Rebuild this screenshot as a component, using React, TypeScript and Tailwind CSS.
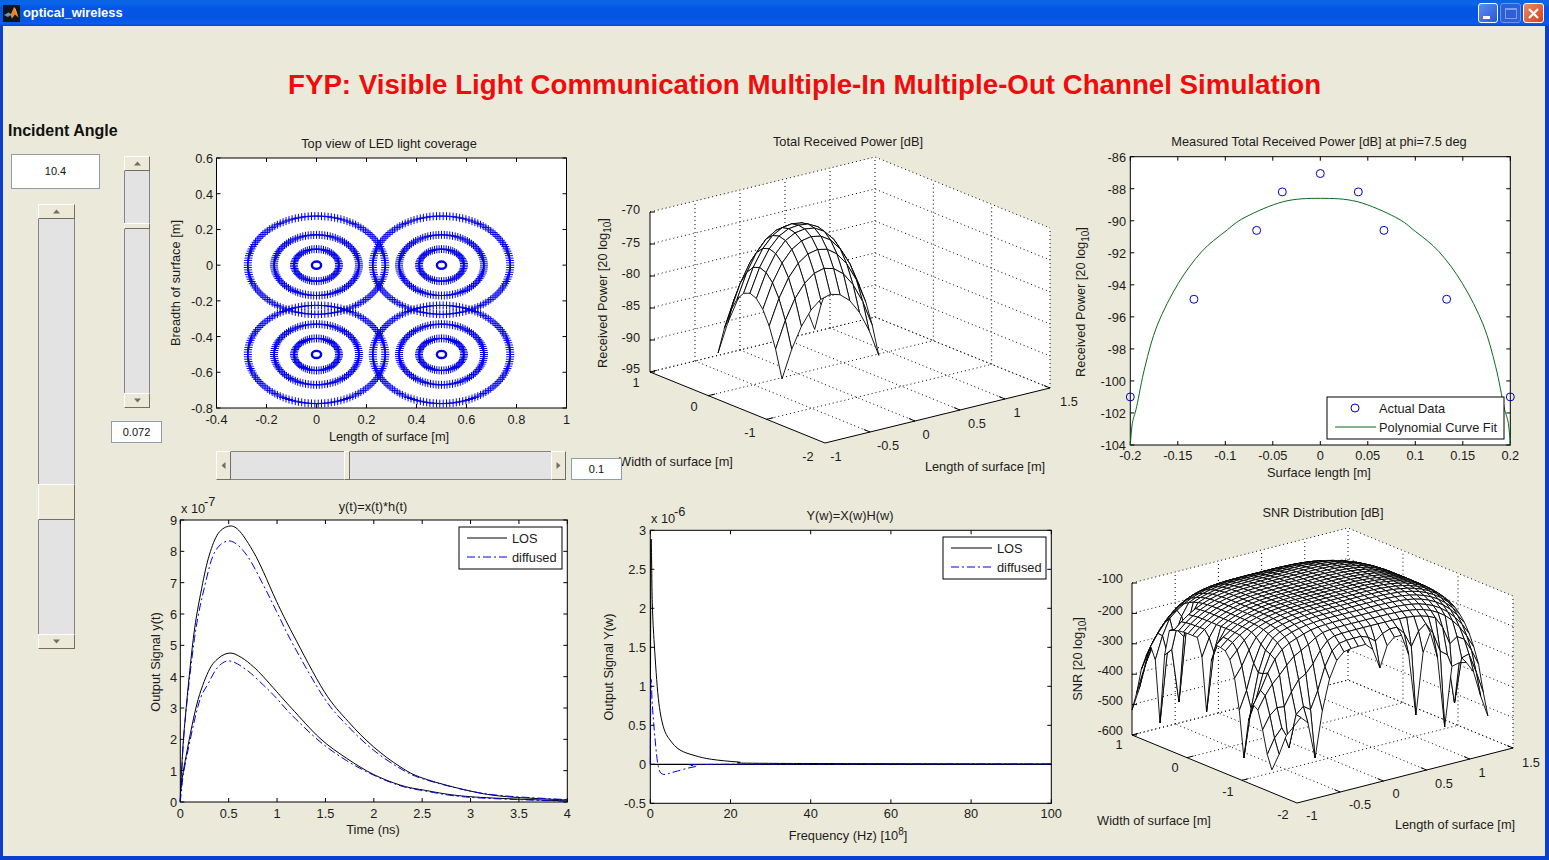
import React from "react";

type Pt = [number, number];
type Tick = [number, string];

// z arr are read off the reference at 3x zoom, this puts them back in page pixels
const unzoom = (ox: number, oy: number, arr: Pt[]): Pt[] =>
  arr.map(([x, y]) => [ox + x / 3, oy + y / 3]);

const spline = (p: Pt[]) => {
  let d = `M${p[0][0]} ${p[0][1]}`;
  for (let i = 0; i < p.length - 1; i++) {
    const a = p[Math.max(i - 1, 0)];
    const b = p[i];
    const c = p[i + 1];
    const e = p[Math.min(i + 2, p.length - 1)];
    d += `C${b[0] + (c[0] - a[0]) / 6} ${b[1] + (c[1] - a[1]) / 6} ${c[0] - (e[0] - b[0]) / 6} ${c[1] - (e[1] - b[1]) / 6} ${c[0]} ${c[1]}`;
  }
  return d;
};

function Label({ x, y, children, end, start, rotate }: { x: number; y: number; children: React.ReactNode; end?: boolean; start?: boolean; rotate?: boolean }) {
  return (
    <text
      x={x}
      y={y}
      textAnchor={end ? "end" : start ? "start" : "middle"}
      transform={rotate ? `rotate(-90 ${x} ${y})` : undefined}
    >
      {children}
    </text>
  );
}

function Axes({ l, r, t, b, xlim, ylim, xs, ys, xBase, yEdge }: { l: number; r: number; t: number; b: number; xlim: Pt; ylim: Pt; xs: Tick[]; ys: Tick[]; xBase: number; yEdge: number }) {
  const px = (v: number) => l + ((v - xlim[0]) / (xlim[1] - xlim[0])) * (r - l);
  const py = (v: number) => b - ((v - ylim[0]) / (ylim[1] - ylim[0])) * (b - t);
  return (
    <g>
      <rect x={l} y={t} width={r - l} height={b - t} fill="#fff" stroke="#000" />
      {xs.map(([v, s]) => (
        <g key={s}>
          <path d={`M${px(v)} ${b}v-4M${px(v)} ${t}v4`} stroke="#000" />
          <Label x={px(v)} y={xBase}>{s}</Label>
        </g>
      ))}
      {ys.map(([v, s]) => (
        <g key={s}>
          <path d={`M${l} ${py(v)}h4M${r} ${py(v)}h-4`} stroke="#000" />
          <Label x={yEdge} y={py(v) + 5} end>{s}</Label>
        </g>
      ))}
    </g>
  );
}

// 3D box: F is the front floor corner, R the right one, L the left one, H the wall height
function Box3D({ F, R, L, H, xn, yn, zn }: { F: Pt; R: Pt; L: Pt; H: number; xn: number; yn: number; zn: number }) {
  const back: Pt = [L[0] + R[0] - F[0], L[1] + R[1] - F[1]];
  const lines: string[] = [];
  const ticks: string[] = [];
  const vx = [R[0] - F[0], R[1] - F[1]];
  const vy = [L[0] - F[0], L[1] - F[1]];
  for (let i = 0; i <= xn; i++) {
    const a = i / xn;
    const x0 = F[0] + vx[0] * a;
    const y0 = F[1] + vx[1] * a;
    if (i > 0) {
      lines.push(`M${x0} ${y0}L${x0 + vy[0]} ${y0 + vy[1]}`);
      ticks.push(`M${x0} ${y0}l${-vy[0] * -0.035} ${-vy[1] * -0.035}`);
    }
    if (i > 0 && i < xn) lines.push(`M${x0 + vy[0]} ${y0 + vy[1]}v${-H}`);
  }
  for (let i = 0; i <= yn; i++) {
    const a = i / yn;
    const x0 = F[0] + vy[0] * a;
    const y0 = F[1] + vy[1] * a;
    if (i > 0) {
      lines.push(`M${x0} ${y0}L${x0 + vx[0]} ${y0 + vx[1]}`);
      ticks.push(`M${x0} ${y0}l${vx[0] * 0.03} ${vx[1] * 0.03}`);
    }
    if (i > 0 && i < yn) lines.push(`M${x0 + vx[0]} ${y0 + vx[1]}v${-H}`);
  }
  for (let i = 0; i <= zn; i++) {
    const h = (i / zn) * H;
    lines.push(`M${L[0]} ${L[1] - h}L${back[0]} ${back[1] - h}L${R[0]} ${R[1] - h}`);
    ticks.push(`M${L[0]} ${L[1] - h}h5`);
  }
  lines.push(`M${back[0]} ${back[1]}v${-H}M${R[0]} ${R[1]}v${-H}`);
  return (
    <g>
      <path
        d={`M${F[0]} ${F[1]}L${R[0]} ${R[1]}V${R[1] - H}L${back[0]} ${back[1] - H}L${L[0]} ${L[1] - H}V${L[1]}Z`}
        fill="#fff"
      />
      <path d={lines.join("")} stroke="#000" strokeDasharray="1 3" fill="none" />
      <path d={`M${L[0]} ${L[1] - H}V${L[1]}L${F[0]} ${F[1]}L${R[0]} ${R[1]}`} stroke="#000" fill="none" />
      <path d={ticks.join("")} stroke="#000" fill="none" />
    </g>
  );
}

// wire mesh: hZ gives the height in pixels over the floor, cells are drawn back to front
function Mesh({ F, R, L, n, a0, a1, b0, b1, hZ }: { F: Pt; R: Pt; L: Pt; n: number; a0: number; a1: number; b0: number; b1: number; hZ: (i: number, j: number) => number }) {
  const P = (i: number, j: number): Pt => {
    const a = a0 + ((a1 - a0) * i) / n;
    const b = b0 + ((b1 - b0) * j) / n;
    return [
      F[0] + a * (R[0] - F[0]) + b * (L[0] - F[0]),
      F[1] + a * (R[1] - F[1]) + b * (L[1] - F[1]) - hZ(i, j),
    ];
  };
  const cells: string[] = [];
  for (let i = n - 1; i >= 0; i--) {
    for (let j = n - 1; j >= 0; j--) {
      const q = [P(i, j), P(i + 1, j), P(i + 1, j + 1), P(i, j + 1)];
      cells.push(`M${q.map((c) => `${c[0].toFixed(1)} ${c[1].toFixed(1)}`).join("L")}Z`);
    }
  }
  return (
    <g fill="#fff" stroke="#000" strokeWidth="0.9" strokeLinejoin="round">
      {cells.map((d, k) => (
        <path key={k} d={d} />
      ))}
    </g>
  );
}

const ringX = (v: number) => 216.5 + (v + 0.4) * 250;
const ringY = (v: number) => 158 + (0.6 - v) * 178.6;
const ringCenters: Pt[] = [[0, 0], [0.5, 0], [0, -0.5], [0.5, -0.5]];

function rings() {
  let d = "";
  const radii: Pt[] = [[0.275, 130], [0.17, 96], [0.09, 60]];
  for (const [cx, cy] of ringCenters) {
    for (const [r, N] of radii) {
      for (let k = 0; k < N; k++) {
        const t = (k / N) * Math.PI * 2;
        const x = ringX(cx + r * Math.cos(t));
        const y = ringY(cy + r * Math.sin(t));
        d += `M${(x - 4).toFixed(1)} ${y.toFixed(1)}h8M${x.toFixed(1)} ${(y - 4).toFixed(1)}v8`;
      }
    }
  }
  return d;
}

const powerH = (i: number, j: number) => {
  const u = (i - 5) / 5;
  const v = (j - 5) / 5;
  return 29 + 129 * (1 - Math.pow((u * u + v * v) / 2, 1.2));
};

// spikes of the SNR mesh: grid position, page y of the tip, reach in cells
const snrF: Pt = [1297, 803];
const snrR: Pt = [1513, 748];
const snrL: Pt = [1132, 735];
const snrTips: [number, number, number, number][] = [
  [0, 0, 770, 5], [0, 6, 758, 5], [3, 1, 747, 4], [6, 0, 758, 5],
  [0, 14, 712, 2], [0, 24, 723, 2], [0, 30, 710, 2], [2, 23, 702, 2],
  [15, 0, 668, 2], [20, 0, 715, 2], [24, 0, 727, 2], [26, 1, 703, 2], [30, 0, 716, 2],
];
const snrH = (() => {
  const n = 30;
  const a = (i: number) => i / n;
  const b = (j: number) => 0.152 + (0.848 * j) / n;
  const floorY = (i: number, j: number) =>
    snrF[1] + a(i) * (snrR[1] - snrF[1]) + b(j) * (snrL[1] - snrF[1]);
  const grid: number[][] = [];
  for (let i = 0; i <= n; i++) {
    grid.push([]);
    for (let j = 0; j <= n; j++) {
      const u = (2 * i) / n - 1;
      const v = (2 * j) / n - 1;
      let h = 150 * (1 - 0.17 * u ** 4 - 0.17 * v ** 4 - 0.48 * (u * v) ** 4);
      for (const [ti, tj, ty, reach] of snrTips) {
        const dist = Math.hypot(i - ti, j - tj);
        const w = Math.max(0, 1 - dist / reach) ** (reach > 3 ? 3 : 2);
        if (w > 0) h = h * (1 - w) + (floorY(ti, tj) - ty) * w;
      }
      grid[i].push(h);
    }
  }
  return (i: number, j: number) => grid[i][j];
})();

const fitHalf: Pt[] = [[181, 945], [187, 880], [200, 830], [225, 710], [262, 585], [325, 460], [395, 365], [465, 305], [525, 262], [640, 215], [751, 205]];
const fitCurve = unzoom(1070, 130, [...fitHalf, ...fitHalf.slice(0, -1).reverse().map(([x, y]): Pt => [1502 - x, y])]);
const snapshots: Pt[] = [[-0.2, -101], [-0.133, -94.9], [-0.067, -90.6], [-0.04, -88.2], [0, -87.05], [0.04, -88.2], [0.067, -90.6], [0.133, -94.9], [0.2, -101]];

const losHi = unzoom(140, 495, [[121, 921], [123, 860], [133, 700], [160, 430], [185, 280], [208, 180], [235, 115], [270, 93], [300, 110], [340, 170], [370, 230], [410, 320], [460, 420], [553, 590], [625, 680], [700, 755], [780, 815], [850, 850], [990, 888], [1100, 905], [1282, 915]]);
const difHi = unzoom(140, 495, [[121, 921], [125, 840], [135, 680], [165, 420], [195, 270], [225, 170], [270, 138], [320, 180], [370, 270], [410, 350], [460, 450], [553, 610], [625, 695], [700, 765], [780, 820], [850, 852], [990, 888], [1100, 903], [1282, 914]]);
const losLo = unzoom(140, 495, [[121, 921], [123, 880], [135, 800], [170, 630], [205, 530], [235, 490], [270, 474], [305, 488], [340, 515], [370, 545], [410, 590], [455, 640], [540, 730], [620, 790], [700, 838], [780, 870], [850, 885], [990, 905], [1282, 918]]);
const difLo = unzoom(140, 495, [[121, 921], [124, 890], [135, 810], [175, 630], [205, 565], [235, 515], [270, 498], [320, 525], [370, 570], [410, 610], [455, 660], [540, 740], [620, 797], [700, 840], [780, 872], [850, 887], [990, 907], [1282, 919]]);
const losF = unzoom(595, 505, [[166, 778], [168, 120], [172, 300], [178, 420], [190, 580], [205, 665], [225, 705], [255, 735], [300, 752], [350, 763], [430, 771], [520, 775], [1369, 777]]);
const difF = unzoom(595, 505, [[166, 778], [168, 530], [172, 600], [180, 700], [190, 785], [205, 808], [240, 800], [300, 785], [380, 778], [1369, 777]]);

const DASH = "8 3 2 3";

function Plot({ box, children }: { box: [number, number, number, number]; children: React.ReactNode }) {
  return (
    <svg
      width={box[2]}
      height={box[3]}
      viewBox={box.join(" ")}
      className="block overflow-visible fill-[#1c1c1c] stroke-none text-[12.8px]"
    >
      {children}
    </svg>
  );
}

function Arrow({ dir }: { dir: "up" | "down" | "left" | "right" }) {
  const d = { up: "M0 4L3.5 0L7 4Z", down: "M0 0L7 0L3.5 4Z", left: "M4 0V7L0 3.5Z", right: "M0 0V7L4 3.5Z" }[dir];
  return (
    <svg width="7" height="7" viewBox="0 0 7 7" className="block">
      <path d={d} fill="#716f64" transform={dir === "up" || dir === "down" ? "translate(0 1.5)" : "translate(1.5 0)"} />
    </svg>
  );
}

const bevel = "flex shrink-0 items-center justify-center bg-[#ece9d8] border border-t-white border-l-white border-r-[#716f64] border-b-[#716f64]";

function VSlider({ upper, lower, thumb, btn, w }: { upper: string; lower: string; thumb: string; btn: string; w: string }) {
  return (
    <div className={`flex flex-col ${w}`}>
      <div className={`${bevel} ${btn}`}><Arrow dir="up" /></div>
      <div className={`bg-[#e3e3e3] border-x border-[#86857c] ${upper}`} />
      <div className={`${bevel} ${thumb}`} />
      <div className={`bg-[#e3e3e3] border-x border-[#86857c] ${lower}`} />
      <div className={`${bevel} ${btn}`}><Arrow dir="down" /></div>
    </div>
  );
}

function NumBox({ className, children }: { className: string; children: string }) {
  return (
    <div className={`relative z-10 flex shrink-0 items-center justify-center border border-[#8f9cab] bg-white text-[11px] text-[#111] ${className}`}>
      {children}
    </div>
  );
}

function MatlabIcon() {
  return (
    <svg width="17" height="17" viewBox="0 0 17 17" className="block shrink-0">
      <rect width="17" height="17" fill="#10141c" />
      <path d="M1 10L5.5 7.5L8 9.5L5 12Z" fill="#4f9fd0" />
      <path d="M5.5 7.5L8 9L11 2L12.5 4L15.5 12.5L12 9.5L9 13.5L7.5 10.5Z" fill="#e8862a" />
      <path d="M11 2L12.5 6L15.5 12.5L12.5 4Z" fill="#f4c04a" />
    </svg>
  );
}

function TitleBar() {
  return (
    <div className="flex h-[26px] shrink-0 items-center bg-[linear-gradient(180deg,#0a63dc_0%,#0a66ee_12%,#0556e6_30%,#0554e2_70%,#0a5cf0_90%,#0446c8_100%)] pl-[3px] pr-[5px]">
      <MatlabIcon />
      <span className="ml-[3px] text-[12.9px] font-bold text-white">optical_wireless</span>
      <div className="ml-auto flex items-center gap-[2px]">
        <div className="flex h-[20px] w-[20px] items-end rounded-[3px] border border-white bg-[linear-gradient(135deg,#5f8df0,#2a55d8)] pb-[3px] pl-[4px]">
          <div className="h-[3px] w-[7px] bg-white" />
        </div>
        <div className="flex h-[20px] w-[21px] items-center justify-center rounded-[3px] border border-[#6c93ea] bg-[#2d5fd8]">
          <div className="h-[11px] w-[12px] border border-t-2 border-[#7f9eea]" />
        </div>
        <div className="flex h-[20px] w-[21px] items-center justify-center rounded-[3px] border border-white bg-[linear-gradient(135deg,#ea8a66,#d8401a)]">
          <svg width="13" height="13" viewBox="0 0 13 13" className="block">
            <path d="M2 2L11 11M11 2L2 11" stroke="#fff" strokeWidth="2.2" />
          </svg>
        </div>
      </div>
    </div>
  );
}

function LegendTwo({ x, y, w, lineX, lineW }: { x: number; y: number; w: number; lineX: number; lineW: number }) {
  return (
    <g>
      <rect x={x} y={y} width={w} height={42} fill="#fff" stroke="#000" />
      <path d={`M${lineX} ${y + 11}h${lineW}`} stroke="#000" />
      <path d={`M${lineX} ${y + 30}h${lineW}`} stroke="#0000e0" strokeDasharray={DASH} />
      <Label x={lineX + lineW + 5} y={y + 16} start>LOS</Label>
      <Label x={lineX + lineW + 5} y={y + 35} start>diffused</Label>
    </g>
  );
}

function CoveragePlot() {
  const xs: Tick[] = [[-0.4, "-0.4"], [-0.2, "-0.2"], [0, "0"], [0.2, "0.2"], [0.4, "0.4"], [0.6, "0.6"], [0.8, "0.8"], [1, "1"]];
  const ys: Tick[] = [[-0.8, "-0.8"], [-0.6, "-0.6"], [-0.4, "-0.4"], [-0.2, "-0.2"], [0, "0"], [0.2, "0.2"], [0.4, "0.4"], [0.6, "0.6"]];
  return (
    <Plot box={[145, 130, 445, 320]}>
      <Label x={389} y={148}>Top view of LED light coverage</Label>
      <Axes l={216.5} r={566.5} t={158} b={408} xlim={[-0.4, 1]} ylim={[-0.8, 0.6]} xs={xs} ys={ys} xBase={424} yEdge={213} />
      <path d={rings()} stroke="#0000ee" fill="none" />
      {ringCenters.map(([cx, cy], k) => (
        <ellipse key={k} cx={ringX(cx)} cy={ringY(cy)} rx="4.6" ry="3.6" stroke="#0000ee" strokeWidth="2.4" fill="#fff" />
      ))}
      <Label x={389} y={441}>Length of surface [m]</Label>
      <Label x={180} y={283} rotate>Breadth of surface [m]</Label>
    </Plot>
  );
}

function PowerSurface() {
  const F: Pt = [825, 443];
  const R: Pt = [1050, 388];
  const L: Pt = [650, 372];
  const zs: [number, string][] = [[209, "-70"], [242, "-75"], [273, "-80"], [305, "-85"], [337, "-90"], [368, "-95"]];
  const tl: [number, number, string][] = [[636, 387, "1"], [694, 411, "0"], [750, 437, "-1"], [808, 461, "-2"], [836, 461, "-1"], [888, 450, "-0.5"], [926, 439, "0"], [977, 428, "0.5"], [1017, 417, "1"], [1069, 406, "1.5"]];
  return (
    <Plot box={[590, 130, 480, 365]}>
      <Label x={848} y={146}>Total Received Power [dB]</Label>
      <Box3D F={F} R={R} L={L} H={160} xn={5} yn={3} zn={5} />
      <Mesh F={F} R={R} L={L} n={10} a0={0.12} a1={0.55} b0={0.4} b1={0.766} hZ={powerH} />
      {zs.map(([y, s]) => <Label key={s} x={640} y={y + 5} end>{s}</Label>)}
      {tl.map(([x, y, s], k) => <Label key={k} x={x} y={y}>{s}</Label>)}
      <Label x={607} y={293} rotate>
        Received Power [20 log<tspan dy="4" fontSize="10">10</tspan><tspan dy="-4">]</tspan>
      </Label>
      <Label x={676} y={466}>Width of surface [m]</Label>
      <Label x={985} y={471}>Length of surface [m]</Label>
    </Plot>
  );
}

function MeasuredPlot() {
  const xs: Tick[] = [[-0.2, "-0.2"], [-0.15, "-0.15"], [-0.1, "-0.1"], [-0.05, "-0.05"], [0, "0"], [0.05, "0.05"], [0.1, "0.1"], [0.15, "0.15"], [0.2, "0.2"]];
  const ys: Tick[] = [-86, -88, -90, -92, -94, -96, -98, -100, -102, -104].map((v): Tick => [v, String(v)]);
  const X = (v: number) => 1130.3 + ((v + 0.2) / 0.4) * 380;
  const Y = (v: number) => 156.7 + ((-86 - v) / 18) * 288.3;
  return (
    <Plot box={[1070, 130, 475, 365]}>
      <Label x={1319} y={146}>Measured Total Received Power [dB] at phi=7.5 deg</Label>
      <Axes l={1130.3} r={1510.3} t={156.7} b={445} xlim={[-0.2, 0.2]} ylim={[-104, -86]} xs={xs} ys={ys} xBase={460} yEdge={1126} />
      <path d={spline(fitCurve)} stroke="#0a6a1c" fill="none" />
      {snapshots.map(([x, y], k) => (
        <circle key={k} cx={X(x)} cy={Y(y)} r="4" stroke="#0000c8" fill="none" />
      ))}
      <rect x={1327} y={397} width={177} height={42} fill="#fff" stroke="#000" />
      <circle cx={1355} cy={408} r="4" stroke="#0000c8" fill="none" />
      <path d="M1335 427h41" stroke="#0a6a1c" />
      <Label x={1379} y={413} start>Actual Data</Label>
      <Label x={1379} y={432} start>Polynomial Curve Fit</Label>
      <Label x={1319} y={477}>Surface length [m]</Label>
      <Label x={1085} y={302} rotate>
        Received Power [20 log<tspan dy="4" fontSize="10">10</tspan><tspan dy="-4">]</tspan>
      </Label>
    </Plot>
  );
}

function TimePlot() {
  const xs: Tick[] = [[0, "0"], [0.5, "0.5"], [1, "1"], [1.5, "1.5"], [2, "2"], [2.5, "2.5"], [3, "3"], [3.5, "3.5"], [4, "4"]];
  const ys: Tick[] = [0, 1, 2, 3, 4, 5, 6, 7, 8, 9].map((v): Tick => [v, String(v)]);
  return (
    <Plot box={[145, 495, 445, 358]}>
      <Label x={373} y={511}>y(t)=x(t)*h(t)</Label>
      <Label x={181} y={513} start>x 10</Label>
      <Label x={204} y={506} start>-7</Label>
      <Axes l={180.3} r={567.3} t={520} b={802} xlim={[0, 4]} ylim={[0, 9]} xs={xs} ys={ys} xBase={818} yEdge={177} />
      <path d={spline(losHi)} stroke="#000" fill="none" />
      <path d={spline(difHi)} stroke="#0000e0" strokeDasharray={DASH} fill="none" />
      <path d={spline(losLo)} stroke="#000" fill="none" />
      <path d={spline(difLo)} stroke="#0000e0" strokeDasharray={DASH} fill="none" />
      <LegendTwo x={459} y={527} w={103} lineX={467} lineW={40} />
      <Label x={373} y={834}>Time (ns)</Label>
      <Label x={160} y={662} rotate>Output Signal y(t)</Label>
    </Plot>
  );
}

function FreqPlot() {
  const xs: Tick[] = [[0, "0"], [20, "20"], [40, "40"], [60, "60"], [80, "80"], [100, "100"]];
  const ys: Tick[] = [[-0.5, "-0.5"], [0, "0"], [0.5, "0.5"], [1, "1"], [1.5, "1.5"], [2, "2"], [2.5, "2.5"], [3, "3"]];
  return (
    <Plot box={[590, 495, 480, 358]}>
      <Label x={850} y={520}>Y(w)=X(w)H(w)</Label>
      <Label x={651} y={523} start>x 10</Label>
      <Label x={674} y={516} start>-6</Label>
      <Axes l={650.3} r={1051.3} t={530.3} b={803.3} xlim={[0, 100]} ylim={[-0.5, 3]} xs={xs} ys={ys} xBase={818} yEdge={646} />
      <path d="M650.3 764.3H1051.3" stroke="#000" strokeWidth="1.3" />
      <path d={spline(losF)} stroke="#000" fill="none" />
      <path d={spline(difF)} stroke="#0000e0" strokeDasharray={DASH} fill="none" />
      <LegendTwo x={943} y={537} w={103} lineX={951} lineW={41} />
      <Label x={848} y={840}>
        Frequency (Hz) [10<tspan dy="-5" fontSize="10">8</tspan><tspan dy="5">]</tspan>
      </Label>
      <Label x={613} y={667} rotate>Output Signal Y(w)</Label>
    </Plot>
  );
}

function SnrSurface() {
  const zs: [number, string][] = [[578, "-100"], [610, "-200"], [640, "-300"], [670, "-400"], [700, "-500"], [730, "-600"]];
  const tl: [number, number, string][] = [[1119, 749, "1"], [1175, 772, "0"], [1228, 796, "-1"], [1283, 819, "-2"], [1312, 820, "-1"], [1360, 809, "-0.5"], [1396, 798, "0"], [1444, 788, "0.5"], [1482, 777, "1"], [1531, 767, "1.5"]];
  return (
    <Plot box={[1070, 495, 475, 358]}>
      <Label x={1323} y={517}>SNR Distribution [dB]</Label>
      <Box3D F={snrF} R={snrR} L={snrL} H={152} xn={5} yn={3} zn={5} />
      <Mesh F={snrF} R={snrR} L={snrL} n={30} a0={0} a1={1} b0={0.152} b1={1} hZ={snrH} />
      {zs.map(([y, s]) => <Label key={s} x={1123} y={y + 5} end>{s}</Label>)}
      {tl.map(([x, y, s], k) => <Label key={k} x={x} y={y}>{s}</Label>)}
      <Label x={1082} y={659} rotate>
        SNR [20 log<tspan dy="4" fontSize="10">10</tspan><tspan dy="-4">]</tspan>
      </Label>
      <Label x={1154} y={825}>Width of surface [m]</Label>
      <Label x={1455} y={829}>Length of surface [m]</Label>
    </Plot>
  );
}

export default function App() {
  return (
    <div className="flex h-[860px] w-[1549px] flex-col overflow-hidden font-['Liberation_Sans',Arial,sans-serif]">
      <TitleBar />
      <div className="flex min-h-0 flex-1 flex-col border-x-[3px] border-b-[4px] border-x-[#0a3fd0] border-b-[#0a3fd0] border-r-[4px] bg-[#ebe9d9]">
        <div className="h-[94px] shrink-0 pl-[285px] pt-[43px]">
          <h1 className="text-[27.7px] font-bold leading-[32px] text-[#ee0c0c]">
            FYP: Visible Light Communication Multiple-In Multiple-Out Channel Simulation
          </h1>
        </div>
        <div className="flex min-h-0 flex-1">
          <div className="flex w-[142px] shrink-0 flex-col">
            <div className="h-[34px] pl-[5px] pt-[1px] text-[16px] font-bold leading-[20px] text-[#111]">Incident Angle</div>
            <div className="flex">
              <div className="ml-[8px] flex w-[89px] shrink-0 flex-col">
                <NumBox className="h-[35px] w-[89px]">10.4</NumBox>
                <div className="ml-[27px] mt-[15px]">
                  <VSlider w="w-[37px]" btn="h-[15px]" upper="h-[265px]" thumb="h-[36px]" lower="h-[114px]" />
                </div>
              </div>
              <div className="ml-[24px] flex w-[26px] shrink-0 flex-col">
                <div className="mt-[2px]">
                  <VSlider w="w-[26px]" btn="h-[15px]" upper="h-[52px]" thumb="h-[6px]" lower="h-[164px]" />
                </div>
                <NumBox className="-ml-[13px] mt-[13px] h-[22px] w-[51px]">0.072</NumBox>
              </div>
            </div>
          </div>
          <div className="grid flex-1 grid-cols-[445px_480px_475px] grid-rows-[365px_358px] pt-[10px]">
            <div className="flex flex-col">
              <CoveragePlot />
              <div className="ml-[71px] mt-px flex items-end">
                <div className="flex h-[29px] w-[350px] shrink-0">
                  <div className={`${bevel} w-[15px]`}><Arrow dir="left" /></div>
                  <div className="w-[113px] border-y border-[#86857c] bg-[#e3e3e3]" />
                  <div className={`${bevel} w-[6px]`} />
                  <div className="w-[201px] border-y border-[#86857c] bg-[#e3e3e3]" />
                  <div className={`${bevel} w-[15px]`}><Arrow dir="right" /></div>
                </div>
                <NumBox className="ml-[5px] h-[22px] w-[51px]">0.1</NumBox>
              </div>
            </div>
            <PowerSurface />
            <MeasuredPlot />
            <TimePlot />
            <FreqPlot />
            <SnrSurface />
          </div>
        </div>
      </div>
    </div>
  );
}
